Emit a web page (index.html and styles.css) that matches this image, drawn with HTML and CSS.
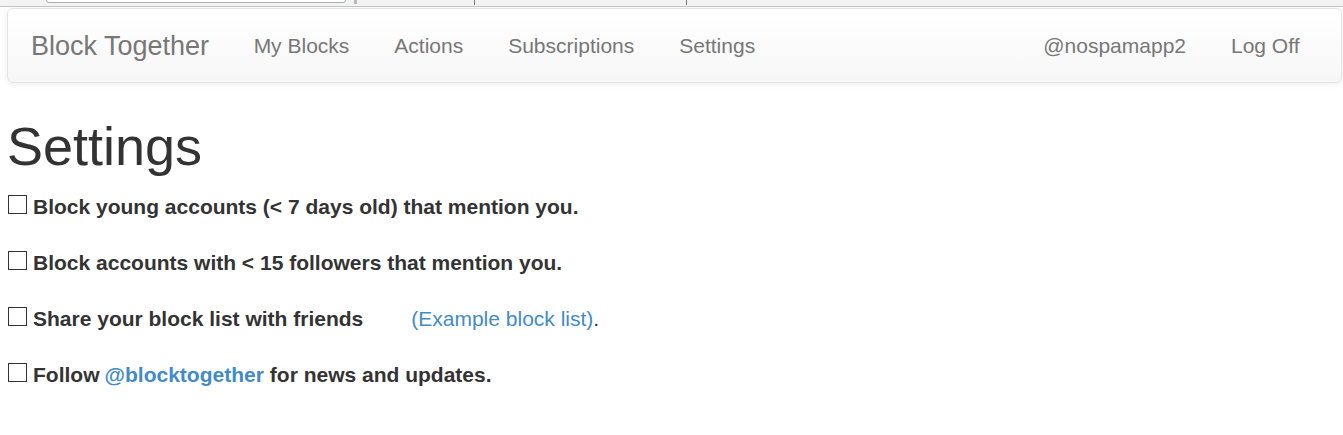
FILE: index.html
```html
<!DOCTYPE html>
<html>
<head>
<meta charset="utf-8">
<title>Block Together - Settings</title>
<link rel="stylesheet" href="styles.css">
</head>
<body>
<div class="chrome">
  <div class="chrome-field"></div>
  <div class="chrome-grip"></div>
  <div class="chrome-sep sep1"></div>
  <div class="chrome-sep sep2"></div>
</div>
<div class="page">
  <nav class="navbar">
    <a class="brand" href="#">Block Together</a>
    <ul class="nav">
      <li><a href="#">My Blocks</a></li>
      <li><a href="#">Actions</a></li>
      <li><a href="#">Subscriptions</a></li>
      <li><a href="#">Settings</a></li>
    </ul>
    <ul class="nav nav-right">
      <li><a href="#">@nospamapp2</a></li>
      <li><a href="#">Log Off</a></li>
    </ul>
  </nav>
  <h1 class="title">Settings</h1>
  <form class="settings">
    <div class="row"><label><input type="checkbox" class="cb"><span class="box"></span>Block young accounts (&lt; 7 days old) that mention you.</label></div>
    <div class="row"><label><input type="checkbox" class="cb"><span class="box"></span>Block accounts with &lt; 15 followers that mention you.</label></div>
    <div class="row"><label><input type="checkbox" class="cb"><span class="box"></span>Share your block list with friends</label><span class="example"><a href="#" class="link">(Example block list)</a>.</span></div>
    <div class="row"><label><input type="checkbox" class="cb"><span class="box"></span>Follow <a href="#" class="link bold">@blocktogether</a> for news and updates.</label></div>
  </form>
</div>
</body>
</html>
```
FILE: styles.css
```css
* { box-sizing: border-box; }
html, body { margin: 0; padding: 0; background: #fff; }
body {
  font-family: "Liberation Sans", Arial, sans-serif;
  color: #333;
  width: 1343px;
  height: 435px;
  overflow: hidden;
}
.chrome {
  position: relative;
  height: 7px;
  background: #f3f3f3;
  border-bottom: 1px solid #c4c4c4;
}
.chrome-field {
  position: absolute;
  left: 46px;
  top: -4px;
  width: 300px;
  height: 7px;
  border: 1px solid #a7aeb9;
  border-radius: 0 0 3px 3px;
  background: #fff;
}
.chrome-grip {
  position: absolute;
  left: 354px;
  top: 0;
  width: 3px;
  height: 4px;
  background: #b8b8b8;
}
.chrome-sep {
  position: absolute;
  top: 0;
  width: 1px;
  height: 5px;
  background: #777;
}
.sep1 { left: 474px; }
.sep2 { left: 686px; }

.page { padding: 1px 1px 0 7px; }

.navbar {
  display: flex;
  align-items: flex-start;
  height: 75px;
  border: 1px solid #e4e4e4;
  border-radius: 6px;
  background: linear-gradient(to bottom, #ffffff 0, #f7f7f7 100%);
  box-shadow: inset 0 1px 0 rgba(255,255,255,.15), 0 1px 7px rgba(0,0,0,.08);
  padding: 0 19px 0 22px;
}
.brand {
  font-size: 27px;
  line-height: 30px;
  padding: 22px 22px 21px 1px;
  color: #777;
  text-decoration: none;
}
.nav {
  display: flex;
  list-style: none;
  margin: 0;
  padding: 0;
}
.nav-right { margin-left: auto; }
.nav a {
  display: block;
  font-size: 21px;
  line-height: 30px;
  padding: 22px 22.5px 22px 22.5px;
  color: #777;
  text-decoration: none;
}
.title {
  font-size: 54px;
  font-weight: 500;
  line-height: 60px;
  margin: 33px 0 0 0;
  color: #333;
}
.settings { margin: 16px 0 0 0; }
.row {
  display: flex;
  align-items: flex-start;
  height: 56px;
  font-size: 21px;
  line-height: 30px;
}
.row label {
  display: flex;
  align-items: flex-start;
  font-weight: bold;
}
.cb { display: none; }
.box {
  width: 19px;
  height: 19px;
  border: 1px solid #333;
  background: #fff;
  margin: 3px 6px 0 1px;
  flex: none;
}
.link { color: #428bca; text-decoration: none; }
.bold { font-weight: bold; margin: 0 6px 0 5px; }
.example { margin-left: 48px; font-weight: normal; }
```
